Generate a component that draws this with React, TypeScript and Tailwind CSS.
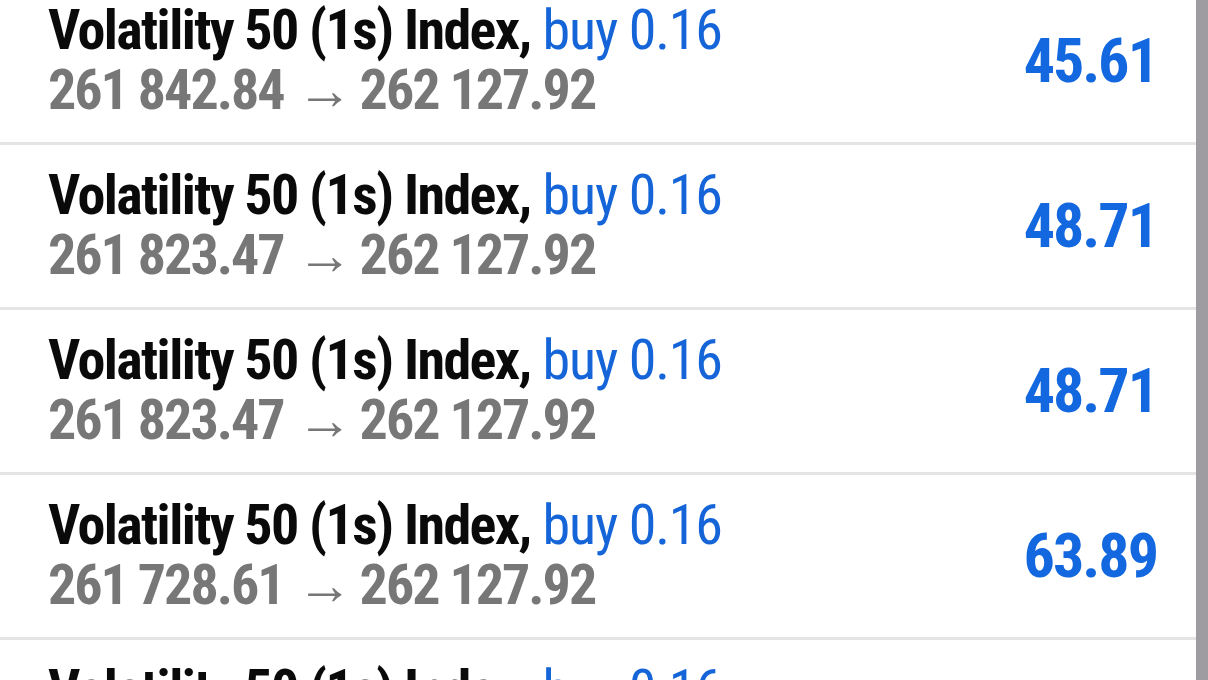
import React from 'react';

interface Trade {
  symbol: string;
  side: string;
  volume: string;
  open: string;
  current: string;
  profit: string;
}

const trades: Trade[] = [
  { symbol: 'Volatility 50 (1s) Index', side: 'buy', volume: '0.16', open: '261 842.84', current: '262 127.92', profit: '45.61' },
  { symbol: 'Volatility 50 (1s) Index', side: 'buy', volume: '0.16', open: '261 823.47', current: '262 127.92', profit: '48.71' },
  { symbol: 'Volatility 50 (1s) Index', side: 'buy', volume: '0.16', open: '261 823.47', current: '262 127.92', profit: '48.71' },
  { symbol: 'Volatility 50 (1s) Index', side: 'buy', volume: '0.16', open: '261 728.61', current: '262 127.92', profit: '63.89' },
  { symbol: 'Volatility 50 (1s) Index', side: 'buy', volume: '0.16', open: '261 728.61', current: '262 127.92', profit: '63.89' },
];

function TradeRow({ trade }: { trade: Trade }) {
  return (
    <div className="flex items-center justify-between border-b-[3px] border-[#e4e4e4] pl-12 pr-[39px] pt-5 pb-[22px]">
      <div className="flex flex-col text-[56px] leading-[60px] whitespace-nowrap">
        <div>
          <span className="font-bold tracking-[-1.6px] text-[#0a0a0a]">{trade.symbol},</span>
          <span className="ml-3 tracking-[-1.2px] text-[#1565d8]">
            {trade.side} {trade.volume}
          </span>
        </div>
        <div className="font-bold text-[#777777]">
          <span className="tracking-[-2px]">{trade.open}</span>
          <span className="ml-[13px] mr-[7px] font-bold">→</span>
          <span className="tracking-[-2px]">{trade.current}</span>
        </div>
      </div>
      <div className="text-[62px] font-bold tracking-[-2px] text-[#1367df] tabular-nums">{trade.profit}</div>
    </div>
  );
}

export default function App() {
  return (
    <div
      className="flex h-[680px] w-[1208px] overflow-hidden bg-white"
      style={{ fontFamily: '"Roboto Condensed", Roboto, sans-serif' }}
    >
      <div className="-mt-5 flex-1">
        {trades.map((t, i) => (
          <TradeRow key={i} trade={t} />
        ))}
      </div>
      <div className="w-3 bg-[#9e9ca1]" />
    </div>
  );
}
